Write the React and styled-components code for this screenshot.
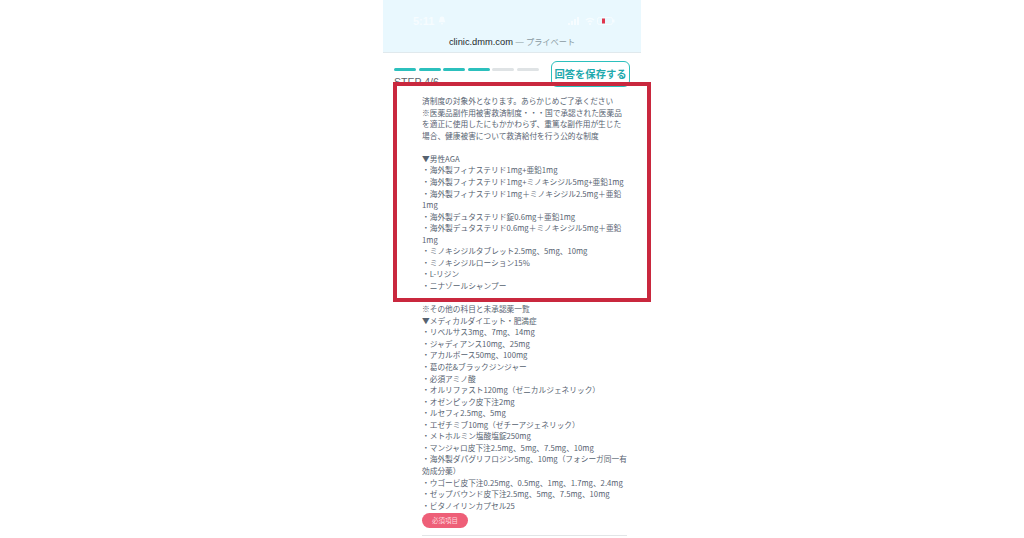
import React from "react";
import styled, { createGlobalStyle } from "styled-components";

const GlobalStyle = createGlobalStyle`
  html, body {
    margin: 0;
    height: 100%;
    background: #fff;
    overflow: hidden;
  }
`;

const Page = styled.div`
  width: 1024px;
  height: 538px;
  display: flex;
  justify-content: center;
  overflow: hidden;
  font-family: "Noto Sans CJK JP", "Noto Sans", sans-serif;
`;

const Phone = styled.div`
  position: relative;
  width: 258px;
  display: flex;
  flex-direction: column;
  background: #fff;
`;

const Header = styled.div`
  flex: none;
  height: 53px;
  box-sizing: border-box;
  background: #e9f8fe;
  border-bottom: 1px solid #e0e9ed;
  display: flex;
  flex-direction: column;
`;

const StatusBar = styled.div`
  height: 35px;
  padding: 6px 26px 0 30px;
  box-sizing: border-box;
  display: flex;
  justify-content: space-between;
  align-items: center;
  color: #f6fcff;
  font: 600 11px "Liberation Sans", sans-serif;
`;

const StatusTime = styled.div`
  display: flex;
  align-items: center;
  gap: 4px;
`;

const StatusIcons = styled.div`
  display: flex;
  align-items: center;
  gap: 2px;
`;

const UrlRow = styled.div`
  text-align: center;
  font: 9.3px/14px "Liberation Sans", "Noto Sans CJK JP", sans-serif;
  color: #23282c;
`;

const UrlNote = styled.span`
  color: #8a9aa2;
  font-size: 8.2px;
`;

const StepRow = styled.div`
  flex: none;
  box-sizing: border-box;
  display: flex;
  justify-content: space-between;
  padding: 8px 11px 0 11px;
  height: 29px;
`;

const StepInfo = styled.div`
  display: flex;
  flex-direction: column;
  gap: 5px;
  padding-top: 7px;
`;

const Progress = styled.div`
  display: flex;
  gap: 2.5px;
`;

const ProgressBar = styled.span`
  width: 22px;
  height: 3px;
  border-radius: 2px;
  background: ${(p) => (p.$done ? "#2cc0bd" : "#dfe3e5")};
`;

const StepLabel = styled.div`
  font: 10.5px/12px "Liberation Sans", sans-serif;
  color: #5a646b;
`;

const SaveButton = styled.div`
  width: 79px;
  height: 26px;
  box-sizing: border-box;
  border: 1.5px solid #2cc0bd;
  border-radius: 6px;
  color: #1fa9ad;
  font-size: 10.3px;
  font-weight: 700;
  line-height: 23px;
  text-align: center;
  white-space: nowrap;
`;

const Body = styled.div`
  flex: none;
  padding: 13px 14px 0 39px;
  color: #566270;
  font-size: 7.7px;
  line-height: 11.57px;
`;

const Line = styled.div`
  min-height: 11.57px;
  white-space: nowrap;
`;

const RequiredTag = styled.div`
  width: 46px;
  height: 15px;
  margin-top: 2px;
  border-radius: 8px;
  background: #ee5f78;
  color: #ffd9df;
  font-size: 6.5px;
  line-height: 15px;
  text-align: center;
`;

const Divider = styled.div`
  height: 1px;
  margin-top: 7px;
  background: #e2e5e7;
`;

const Highlight = styled.div`
  position: absolute;
  left: 10px;
  top: 82px;
  width: 258px;
  height: 220px;
  box-sizing: border-box;
  border: 4px solid #c9283e;
  background: transparent;
  pointer-events: none;
`;

const lines = [
  "済制度の対象外となります。あらかじめご了承ください",
  "※医薬品副作用被害救済制度・・・国で承認された医薬品",
  "を適正に使用したにもかかわらず、重篤な副作用が生じた",
  "場合、健康被害について救済給付を行う公的な制度",
  "",
  "▼男性AGA",
  "・海外製フィナステリド1mg+亜鉛1mg",
  "・海外製フィナステリド1mg+ミノキシジル5mg+亜鉛1mg",
  "・海外製フィナステリド1mg＋ミノキシジル2.5mg＋亜鉛",
  "1mg",
  "・海外製デュタステリド錠0.6mg＋亜鉛1mg",
  "・海外製デュタステリド0.6mg＋ミノキシジル5mg＋亜鉛",
  "1mg",
  "・ミノキシジルタブレット2.5mg、5mg、10mg",
  "・ミノキシジルローション15%",
  "・L-リジン",
  "・ニナゾールシャンプー",
  "",
  "※その他の科目と未承認薬一覧",
  "▼メディカルダイエット・肥満症",
  "・リベルサス3mg、7mg、14mg",
  "・ジャディアンス10mg、25mg",
  "・アカルボース50mg、100mg",
  "・葛の花&ブラックジンジャー",
  "・必須アミノ酸",
  "・オルリファスト120mg（ゼニカルジェネリック）",
  "・オゼンピック皮下注2mg",
  "・ルセフィ2.5mg、5mg",
  "・エゼチミブ10mg（ゼチーアジェネリック）",
  "・メトホルミン塩酸塩錠250mg",
  "・マンジャロ皮下注2.5mg、5mg、7.5mg、10mg",
  "・海外製ダパグリフロジン5mg、10mg（フォシーガ同一有",
  "効成分薬）",
  "・ウゴービ皮下注0.25mg、0.5mg、1mg、1.7mg、2.4mg",
  "・ゼップバウンド皮下注2.5mg、5mg、7.5mg、10mg",
  "・ビタノイリンカプセル25",
];

function BellIcon() {
  return (
    <svg width="8" height="9" viewBox="0 0 8 9" fill="#f6fcff">
      <path d="M4 0.5a2.4 2.4 0 0 0-2.4 2.4c0 2-1.1 2.8-1.1 3.4h7c0-.6-1.1-1.4-1.1-3.4A2.4 2.4 0 0 0 4 .5z" />
      <rect x="3" y="7" width="2" height="1.5" rx="0.7" />
    </svg>
  );
}

function SignalIcon() {
  return (
    <svg width="15" height="8" viewBox="0 0 15 8" fill="#f6fcff">
      <rect x="0" y="6" width="2" height="2" />
      <rect x="3" y="4" width="2" height="4" />
      <rect x="6" y="2" width="2" height="6" />
      <rect x="9" y="0" width="2" height="8" />
    </svg>
  );
}

function WifiIcon() {
  return (
    <svg width="10" height="8" viewBox="0 0 10 8" fill="none" stroke="#f6fcff" strokeWidth="1.4">
      <path d="M1 3a6 6 0 0 1 8 0M2.8 5a3.4 3.4 0 0 1 4.4 0" />
      <circle cx="5" cy="7" r="0.4" />
    </svg>
  );
}

function BatteryIcon() {
  return (
    <svg width="18" height="8" viewBox="0 0 18 8">
      <rect x="0.5" y="0.5" width="15" height="7" rx="2" fill="none" stroke="#f6fcff" />
      <rect x="5" y="1.5" width="3" height="5" fill="#e0354c" />
      <rect x="16" y="2.5" width="1.5" height="3" fill="#f6fcff" />
    </svg>
  );
}

export default function App() {
  return (
    <>
      <GlobalStyle />
      <Page>
        <Phone>
          <Header>
            <StatusBar>
              <StatusTime>
                <span>5:11</span>
                <BellIcon />
              </StatusTime>
              <StatusIcons>
                <SignalIcon />
                <WifiIcon />
                <BatteryIcon />
              </StatusIcons>
            </StatusBar>
            <UrlRow>
              clinic.dmm.com <UrlNote>— プライベート</UrlNote>
            </UrlRow>
          </Header>
          <StepRow>
            <StepInfo>
              <Progress>
                {[1, 2, 3, 4, 5, 6].map((n) => (
                  <ProgressBar key={n} $done={n <= 4} />
                ))}
              </Progress>
              <StepLabel>STEP 4/6</StepLabel>
            </StepInfo>
            <SaveButton>回答を保存する</SaveButton>
          </StepRow>
          <Body>
            {lines.map((text, i) => (
              <Line key={i}>{text}</Line>
            ))}
            <RequiredTag>必須項目</RequiredTag>
            <Divider />
          </Body>
          <Highlight />
        </Phone>
      </Page>
    </>
  );
}
